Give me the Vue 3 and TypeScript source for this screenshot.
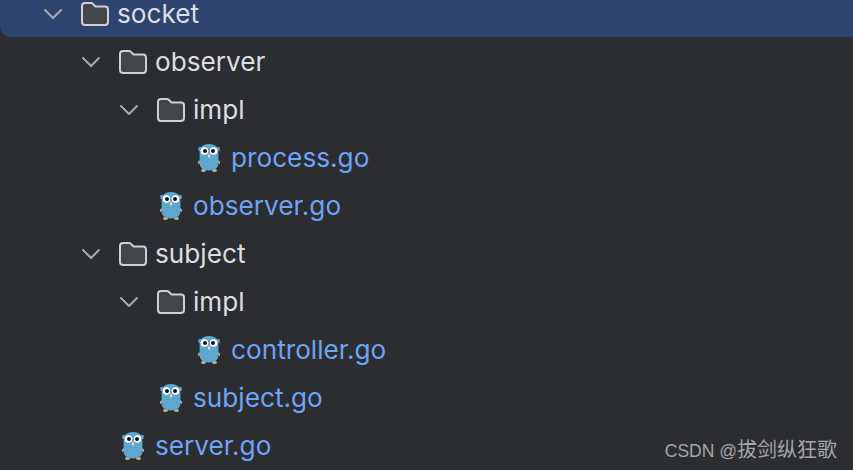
<script setup lang="ts">
type Row = { name: string; level: number; kind: 'dir' | 'go'; selected?: boolean }

const rows: Row[] = [
  { name: 'socket', level: 0, kind: 'dir', selected: true },
  { name: 'observer', level: 1, kind: 'dir' },
  { name: 'impl', level: 2, kind: 'dir' },
  { name: 'process.go', level: 3, kind: 'go' },
  { name: 'observer.go', level: 2, kind: 'go' },
  { name: 'subject', level: 1, kind: 'dir' },
  { name: 'impl', level: 2, kind: 'dir' },
  { name: 'controller.go', level: 3, kind: 'go' },
  { name: 'subject.go', level: 2, kind: 'go' },
  { name: 'server.go', level: 1, kind: 'go' }
]
</script>

<template>
  <div class="tree">
    <div
      v-for="(row, i) in rows"
      :key="i"
      class="row"
      :class="{ 'row--selected': row.selected }"
      :style="{ paddingLeft: 43 + row.level * 38 + 'px' }"
    >
      <template v-if="row.kind === 'dir'">
        <svg class="chevron" width="20" height="12" viewBox="0 0 20 12">
          <path d="M2 2 L10 10 L18 2" fill="none" stroke="#a8abb0" stroke-width="2" stroke-linecap="round" stroke-linejoin="round" />
        </svg>
        <svg class="folder" width="28" height="24" viewBox="0 0 28 24">
          <path
            d="M4 1 H10 Q11.2 1 12 2 L14.5 4.5 H24 Q27 4.5 27 7.5 V20 Q27 23 24 23 H4 Q1 23 1 20 V4 Q1 1 4 1 Z"
            fill="#43454a"
            stroke="#ced0d6"
            stroke-width="2"
            stroke-linejoin="round"
          />
        </svg>
      </template>
      <svg v-else class="gopher" width="24" height="30" viewBox="0 0 24 30">
        <ellipse cx="3" cy="6" rx="2" ry="2.2" fill="#5b9fc4" />
        <ellipse cx="21" cy="6" rx="2" ry="2.2" fill="#5b9fc4" />
        <path d="M2.4 17 Q0 19 1 21 L3.6 20 Z" fill="#c9a98a" />
        <path d="M21.6 17 Q24 19 23 21 L20.4 20 Z" fill="#c9a98a" />
        <ellipse cx="6.5" cy="27.4" rx="2.4" ry="1.6" fill="#c9a98a" />
        <ellipse cx="17.5" cy="27.4" rx="2.4" ry="1.6" fill="#c9a98a" />
        <path d="M12 1 C5 1 2.6 5 2.6 11 V20 C2.6 25 6 27.4 12 27.4 C18 27.4 21.4 25 21.4 20 V11 C21.4 5 19 1 12 1 Z" fill="#5ea7d0" />
        <circle cx="7.4" cy="8" r="3.8" fill="#fff" />
        <circle cx="16.6" cy="8" r="3.8" fill="#fff" />
        <circle cx="8" cy="8" r="2" fill="#111" />
        <circle cx="16" cy="8" r="2" fill="#111" />
        <ellipse cx="12" cy="11.6" rx="1.5" ry="1" fill="#d8b79c" />
        <rect x="11.1" y="12.4" width="1.8" height="2" fill="#f1f1f1" />
      </svg>
      <span class="name" :class="{ 'name--go': row.kind === 'go' }">{{ row.name }}</span>
    </div>
    <div class="watermark"><span class="watermark__latin">CSDN @</span>拔剑纵狂歌</div>
  </div>
</template>

<style>
html,
body {
  margin: 0;
  background: #2b2d30;
  overflow: hidden;
}
</style>

<style scoped>
.tree {
  position: relative;
  width: 853px;
  height: 470px;
  overflow: hidden;
  background: #2b2d30;
  font-family: Inter, 'Noto Sans', sans-serif;
}

.row {
  display: flex;
  align-items: center;
  height: 48px;
  box-sizing: border-box;
  font-size: 26.2px;
  color: #dcdee3;
}

.row:first-child {
  height: 37px;
  padding-bottom: 9px;
  margin-bottom: 1px;
  background: #2e436e;
  border-bottom-left-radius: 10px;
}

.chevron {
  flex: none;
  margin-right: 18px;
}

.folder {
  flex: none;
  margin-right: 8px;
  margin-bottom: 1px;
}

.gopher {
  flex: none;
  margin-left: 40px;
  margin-right: 10px;
}

.name {
  line-height: 24px;
}

.name--go {
  color: #6ea4f4;
}

.watermark {
  position: absolute;
  right: 16px;
  top: 435px;
  font-family: 'Liberation Sans', 'Noto Sans CJK SC', sans-serif;
  font-size: 20px;
  line-height: 30px;
  color: #a6a7a9;
}

.watermark__latin {
  font-size: 17.5px;
}
</style>
